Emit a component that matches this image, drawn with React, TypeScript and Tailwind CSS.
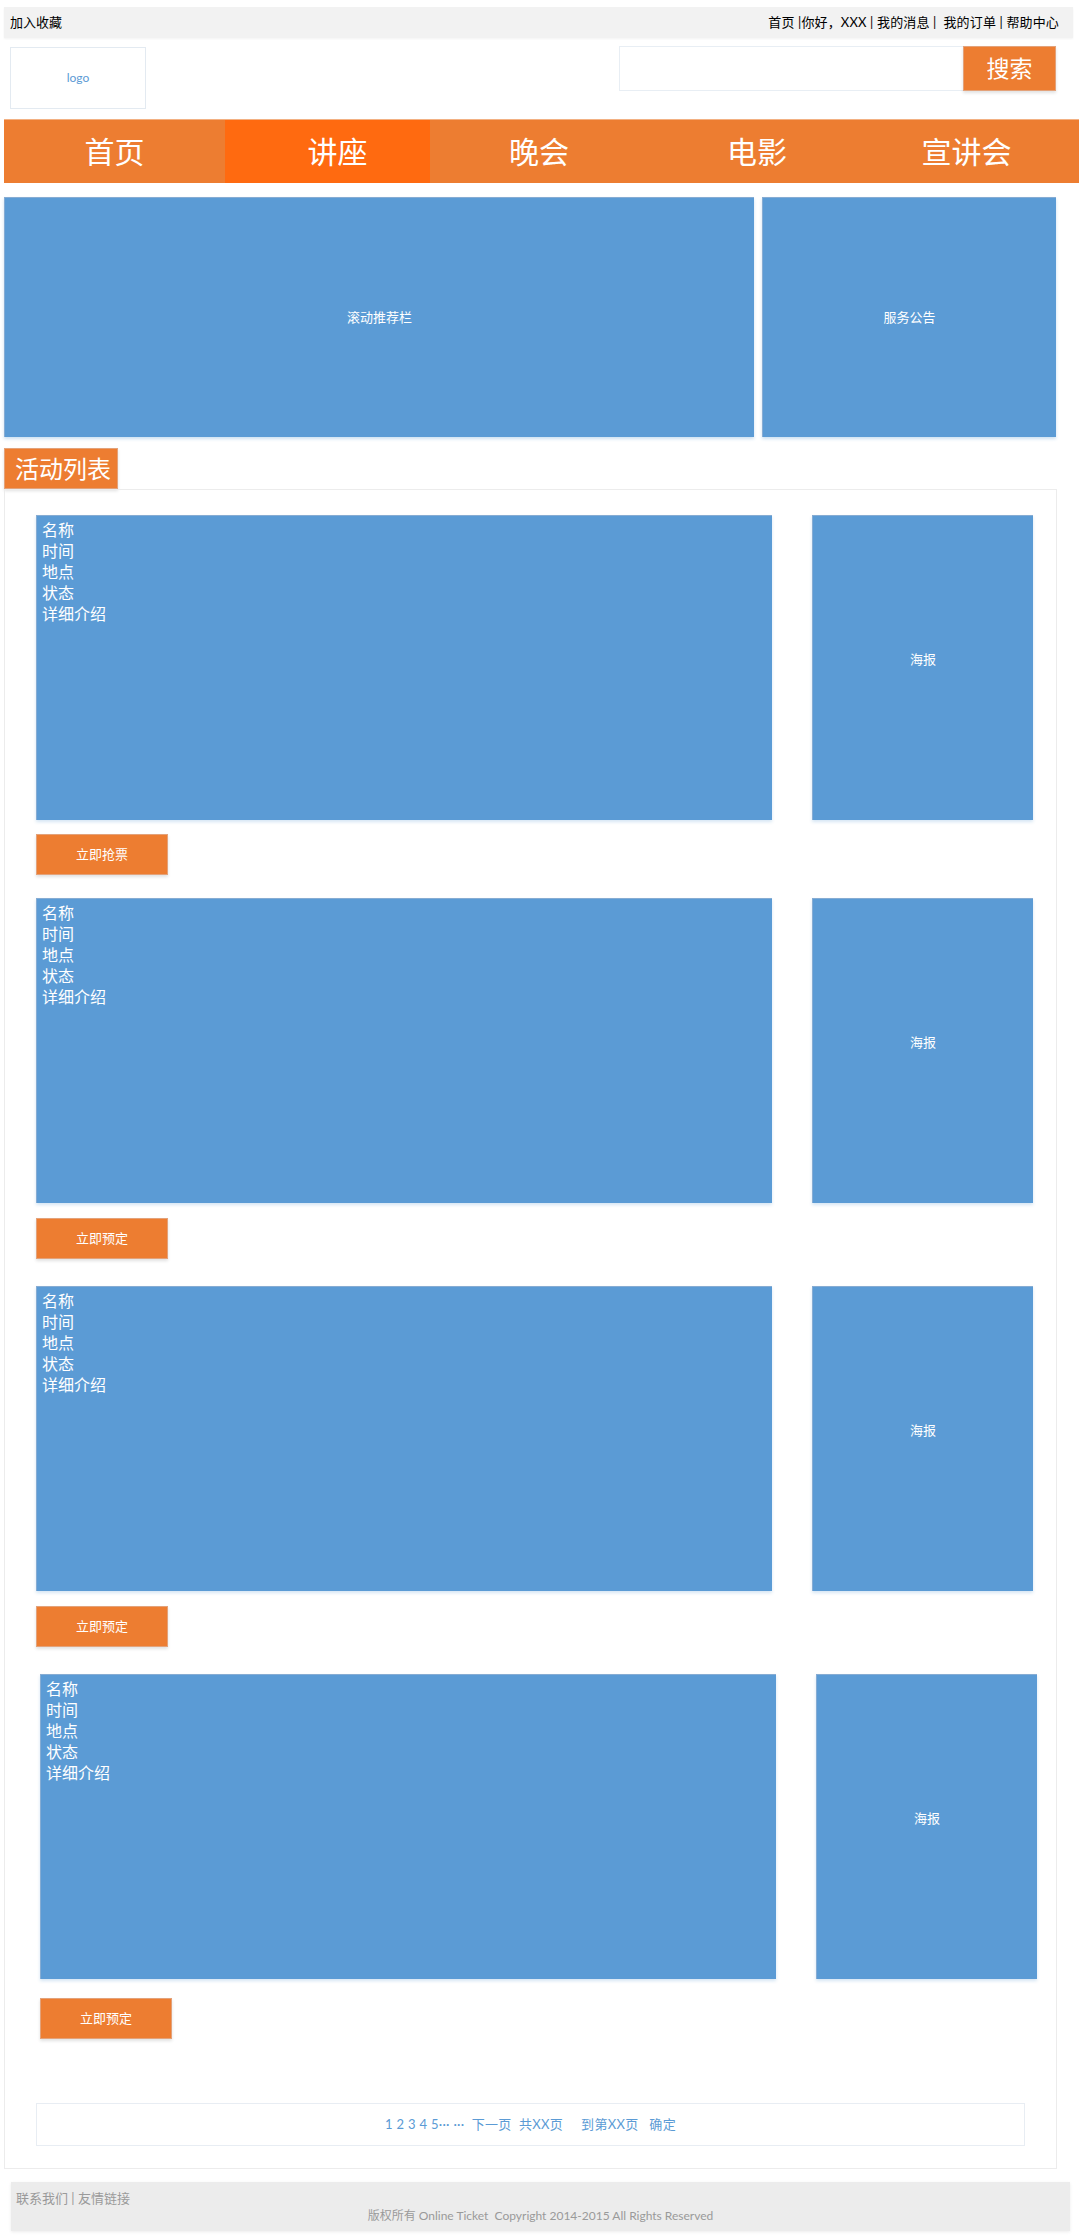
const navItems = [
  { label: '首页', w: 'w-[221px]', extra: '', active: false },
  { label: '讲座', w: 'w-[205px]', extra: 'pl-[20px]', active: true },
  { label: '晚会', w: 'w-[218px]', extra: '', active: false },
  { label: '电影', w: 'w-[218px]', extra: '', active: false },
  { label: '宣讲会', w: 'w-[213px]', extra: 'pr-[12px]', active: false },
];

const events = [
  { action: '立即抢票', shift: false, gap: 'mt-0', btnGap: 'mt-[14px]' },
  { action: '立即预定', shift: false, gap: 'mt-[23px]', btnGap: 'mt-[15px]' },
  { action: '立即预定', shift: false, gap: 'mt-[27px]', btnGap: 'mt-[15px]' },
  { action: '立即预定', shift: true, gap: 'mt-[27px]', btnGap: 'mt-[19px]' },
];

const infoLines = ['名称', '时间', '地点', '状态', '详细介绍'];

function EventCard({ action, shift, gap, btnGap }: { action: string; shift: boolean; gap: string; btnGap: string }) {
  return (
    <div className={`${gap} ${shift ? 'ml-[4px]' : ''}`}>
      <div className="flex">
        {/* info block */}
        <div className="w-[736px] h-[305px] bg-[#5b9bd5] border-t border-l border-[#86acd3] shadow-[0_2px_3px_rgba(91,155,213,0.25)] pl-[5px] pt-[3px] text-white text-[16px] leading-[21px]">
          {infoLines.map((line) => (
            <div key={line}>{line}</div>
          ))}
        </div>
        {/* poster */}
        <div className="ml-[40px] w-[221px] h-[305px] bg-[#5b9bd5] border-t border-l border-[#86acd3] shadow-[0_2px_3px_rgba(91,155,213,0.25)] flex items-center justify-center pb-[17px] text-white text-[13px]">
          海报
        </div>
      </div>
      <button className={`${btnGap} w-[132px] h-[41px] bg-[#ed7d31] border border-[#e3a27a] shadow-[0_2px_3px_rgba(0,0,0,0.12)] text-white text-[13px] flex items-center justify-center`}>
        {action}
      </button>
    </div>
  );
}

export default function App() {
  return (
    <div
      className="w-[1079px] min-h-[2238px] bg-white text-black pt-[7px]"
      style={{ fontFamily: '"Lato", "Noto Sans CJK SC", sans-serif' }}
    >
      {/* Top bar */}
      <div className="ml-[4px] w-[1069px] h-[31px] bg-[#f2f2f2] shadow-[0_1px_2px_rgba(0,0,0,0.05)] flex items-center justify-between pl-[6px] pr-[14px] text-[13px]">
        <span>加入收藏</span>
        <span className="whitespace-pre tracking-[0.15px]">首页 |你好，XXX | 我的消息 |  我的订单 | 帮助中心</span>
      </div>

      {/* Header: logo + search */}
      <div className="mt-[8px] h-[73px] flex items-start">
        <div className="ml-[10px] mt-[1px] w-[136px] h-[62px] border border-[#e3eaf1] flex items-center justify-center text-[12px] text-[#5b9bd5]">
          logo
        </div>
        <div className="ml-auto mr-[23px] flex">
          <div className="w-[344px] h-[45px] border border-[#e8eef4] border-r-0" />
          <button className="w-[93px] h-[45px] bg-[#ed7d31] border border-[#e3a27a] shadow-[0_2px_3px_rgba(0,0,0,0.12)] text-white text-[23px] flex items-center justify-center">
            搜索
          </button>
        </div>
      </div>

      {/* Nav */}
      <div className="ml-[4px] h-[64px] flex bg-[#ed7d31] border-t border-[#f3b183]">
        {navItems.map((item) => (
          <div
            key={item.label}
            className={`${item.w} ${item.extra} h-full flex items-center justify-center text-white text-[30px] ${
              item.active ? 'bg-[#ff6a10]' : ''
            }`}
          >
            {item.label}
          </div>
        ))}
      </div>

      {/* Banner row */}
      <div className="mt-[14px] ml-[4px] flex gap-[8px]">
        <div className="w-[750px] h-[240px] bg-[#5b9bd5] border-t border-l border-[#86acd3] shadow-[0_2px_3px_rgba(91,155,213,0.3)] flex items-center justify-center text-white text-[13px]">
          滚动推荐栏
        </div>
        <div className="w-[294px] h-[240px] bg-[#5b9bd5] border-t border-l border-[#86acd3] shadow-[0_2px_3px_rgba(91,155,213,0.3)] flex items-center justify-center text-white text-[13px]">
          服务公告
        </div>
      </div>

      {/* Activity list */}
      <div className="mt-[11px] ml-[4px] w-[1053px]">
        <div className="w-[114px] h-[41px] bg-[#ed7d31] border border-[#e3a27a] shadow-[0_2px_3px_rgba(0,0,0,0.12)] text-white text-[24px] flex items-center pl-[10px]">
          活动列表
        </div>
        <div className="border border-[#ececec] pl-[31px] pt-[25px] pb-[22px]">
          {events.map((ev, i) => (
            <EventCard key={i} action={ev.action} shift={ev.shift} gap={ev.gap} btnGap={ev.btnGap} />
          ))}

          {/* Pagination */}
          <div className="mt-[64px] w-[989px] h-[43px] border border-[#e8edf3] flex items-center justify-center text-[13px] text-[#5b9bd5] whitespace-pre tracking-[0.3px]">
            1 2 3 4 5··· ···  下一页  共XX页     到第XX页   确定
          </div>
        </div>
      </div>

      {/* Footer */}
      <div className="mt-[13px] ml-[11px] w-[1059px] h-[49px] bg-[#ececec] shadow-[0_1px_3px_rgba(0,0,0,0.08)] pt-[7px] pl-[5px] text-[#9a9a9a]">
        <div className="text-[13px] leading-[18px]">联系我们 | 友情链接</div>
        <div className="text-[12px] leading-[18px] text-center pr-[5px] whitespace-pre">
          版权所有 Online Ticket  Copyright 2014-2015 All Rights Reserved
        </div>
      </div>
    </div>
  );
}
